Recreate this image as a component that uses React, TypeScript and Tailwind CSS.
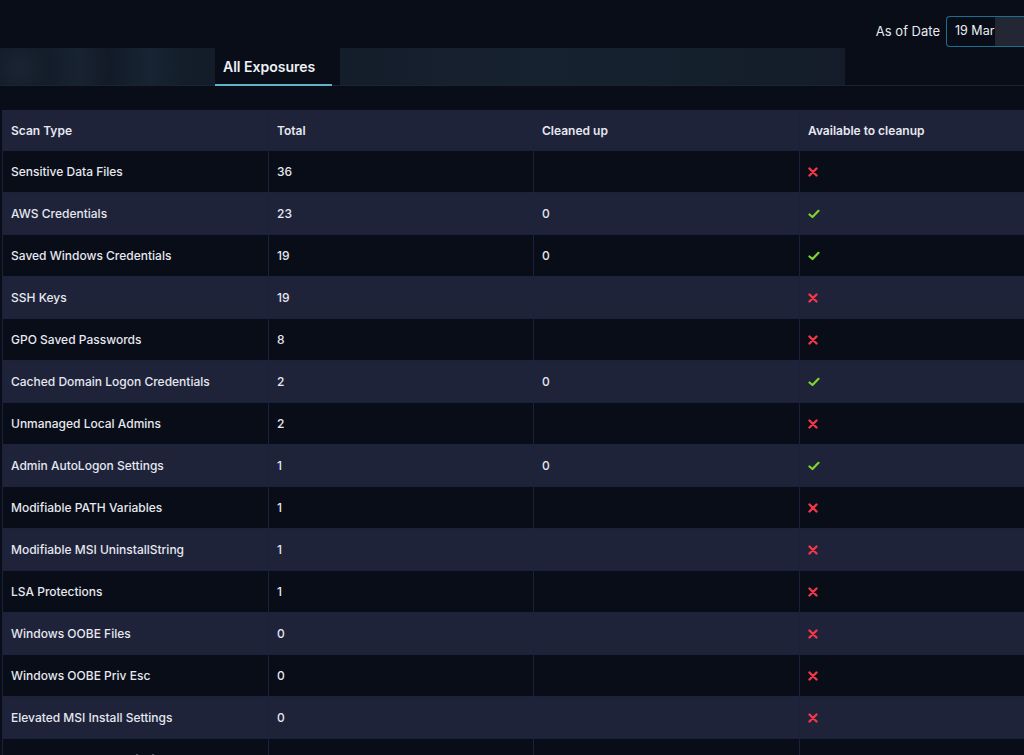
import { ReactNode } from 'react'

type Row = {
  name: string
  total: number
  cleaned?: number
  available: boolean
}

const rows: Row[] = [
  { name: 'Sensitive Data Files', total: 36, available: false },
  { name: 'AWS Credentials', total: 23, cleaned: 0, available: true },
  { name: 'Saved Windows Credentials', total: 19, cleaned: 0, available: true },
  { name: 'SSH Keys', total: 19, available: false },
  { name: 'GPO Saved Passwords', total: 8, available: false },
  { name: 'Cached Domain Logon Credentials', total: 2, cleaned: 0, available: true },
  { name: 'Unmanaged Local Admins', total: 2, available: false },
  { name: 'Admin AutoLogon Settings', total: 1, cleaned: 0, available: true },
  { name: 'Modifiable PATH Variables', total: 1, available: false },
  { name: 'Modifiable MSI UninstallString', total: 1, available: false },
  { name: 'LSA Protections', total: 1, available: false },
  { name: 'Windows OOBE Files', total: 0, available: false },
  { name: 'Windows OOBE Priv Esc', total: 0, available: false },
  { name: 'Elevated MSI Install Settings', total: 0, available: false },
  { name: 'Scheduled Task Permissions', total: 0, available: false },
]

function CrossIcon() {
  return (
    <svg width="10" height="10" viewBox="0 0 10 10" className="block">
      <path d="M1.5 1.5 L8.5 8.5 M8.5 1.5 L1.5 8.5" stroke="#f0384a" strokeWidth="2.4" strokeLinecap="round" />
    </svg>
  )
}

function CheckIcon() {
  return (
    <svg width="12" height="10" viewBox="0 0 12 10" className="block">
      <path d="M1.5 5.5 L4.5 8 L10.5 1.8" stroke="#7fd62a" strokeWidth="2.2" fill="none" strokeLinecap="round" strokeLinejoin="round" />
    </svg>
  )
}

function Cell({ children, last }: { children?: ReactNode; last?: boolean }) {
  return (
    <div className={`flex items-center px-[8px] ${last ? '' : 'border-r border-[#18223a]'}`}>
      {children}
    </div>
  )
}

export default function App() {
  return (
    <div
      className="h-[755px] w-[1024px] overflow-hidden bg-[#090d18] text-[#e6e8ef]"
      style={{ fontFamily: 'Inter, "Noto Sans", sans-serif' }}
    >
      <div className="flex h-[48px] items-end justify-end gap-[6px] pb-[1px]">
        <span className="mb-[6px] text-[13px] text-[#e8eaf0]">As of Date</span>
        <div className="flex h-[31px] w-[78px] items-center overflow-hidden rounded-l-[4px] border border-r-0 border-[#1b6f8f] pl-[8px]">
          <span className="text-[12.5px] text-[#eef0f4]">19 Mar</span>
          <div className="ml-[1px] h-full flex-1 bg-[#232733]" />
        </div>
      </div>

      <div className="flex h-[38px] border-b border-[#1c2330]">
        <div className="w-[215px] bg-[radial-gradient(circle_at_20px_20px,#1a2533_0,#131c29_30px,#182332_60px,#121a27_90px,#182433_130px,#131c29_170px)]" />
        <div className="relative flex w-[125px] items-center pl-[8px]">
          <span className="text-[14px] font-semibold text-[#eef1f6]">All Exposures</span>
          <div className="absolute bottom-[-1px] left-0 h-[2px] w-[117px] bg-[#5fb4c9]" />
        </div>
        <div className="w-[505px] bg-[linear-gradient(90deg,#141d2a,#172231_40%,#15202d_70%,#141c29)]" />
        <div className="flex-1" />
      </div>

      <div className="mt-[24px] ml-[2px] border-l border-[#18223a]">
        <div className="grid h-[41px] grid-cols-[266px_265px_266px_1fr] border-b border-[#18223a] bg-[#1e233a] pt-[2px] text-[12px] font-semibold">
          <Cell>Scan Type</Cell>
          <Cell>Total</Cell>
          <Cell>Cleaned up</Cell>
          <Cell last>Available to cleanup</Cell>
        </div>
        {rows.map((row, i) => (
          <div
            key={row.name}
            className={`grid h-[42px] grid-cols-[266px_265px_266px_1fr] border-b border-[#18223a] text-[12px] font-medium ${
              i % 2 === 0 ? 'bg-[#090d18]' : 'bg-[#1e233a]'
            }`}
          >
            <Cell>{row.name}</Cell>
            <Cell>{row.total}</Cell>
            <Cell>{row.cleaned !== undefined ? row.cleaned : ''}</Cell>
            <Cell last>{row.available ? <CheckIcon /> : <CrossIcon />}</Cell>
          </div>
        ))}
      </div>
    </div>
  )
}
